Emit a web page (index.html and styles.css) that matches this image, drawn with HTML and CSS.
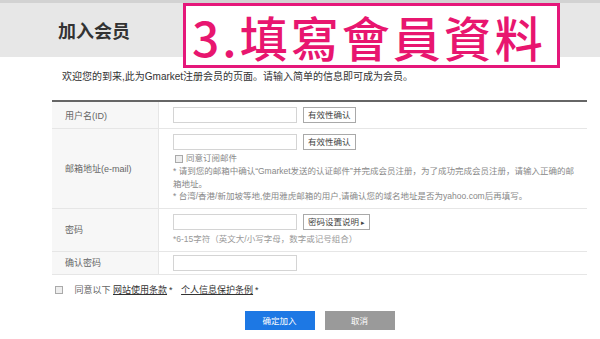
FILE: index.html
```html
<!DOCTYPE html>
<html lang="zh-CN">
<head>
  <meta charset="UTF-8">
  <meta name="viewport" content="width=device-width, initial-scale=1.0">
  <title>加入会员</title>
  <link rel="stylesheet" href="styles.css">
</head>
<body>
  <div class="top-bar">
    <h1>加入会员</h1>
  </div>

  <!-- 标注 -->
  <div class="stamp">3.填寫會員資料</div>

  <div class="content">
    <p class="intro">欢迎您的到来,此为Gmarket注册会员的页面。请输入简单的信息即可成为会员。</p>

    <table class="form-table">
      <tr class="row-id">
        <th>用户名(ID)</th>
        <td>
          <div class="field">
            <input type="text" class="text-input">
            <button class="check-btn">有效性确认</button>
          </div>
        </td>
      </tr>
      <tr class="row-mail">
        <th>邮箱地址(e-mail)</th>
        <td>
          <div class="field">
            <input type="text" class="text-input">
            <button class="check-btn">有效性确认</button>
          </div>
          <div class="subscribe"><span class="box"></span>同意订阅邮件</div>
          <p class="note">* 请到您的邮箱中确认“Gmarket发送的认证邮件”并完成会员注册，为了成功完成会员注册，请输入正确的邮箱地址。</p>
          <p class="note">* 台湾/香港/新加坡等地,使用雅虎邮箱的用户,请确认您的域名地址是否为yahoo.com后再填写。</p>
        </td>
      </tr>
      <tr class="row-pw">
        <th>密码</th>
        <td>
          <div class="field">
            <input type="password" class="text-input">
            <button class="check-btn">密码设置说明<span class="arrow">▸</span></button>
          </div>
          <p class="note pw-note">*6-15字符（英文大/小写字母，数字或记号组合）</p>
        </td>
      </tr>
      <tr class="row-confirm">
        <th>确认密码</th>
        <td>
          <input type="password" class="text-input">
        </td>
      </tr>
    </table>

    <div class="agree">
      <span class="box"></span>
      同意以下 <a href="#">网站使用条款</a><span class="star">*</span>
      <a href="#">个人信息保护条例</a><span class="star">*</span>
    </div>

    <div class="actions">
      <button class="btn btn-ok">确定加入</button>
      <button class="btn btn-cancel">取消</button>
    </div>
  </div>
</body>
</html>
```

FILE: styles.css
```css
body {
  margin: 0;
  font-family: "Liberation Sans", "Noto Sans CJK SC", sans-serif;
  color: #333;
  background: #fff;
}
.top-bar {
  height: 54px;
  border-top: 3px solid #d2d2d2;
  background: #e7e7e7;
  padding-left: 58px;
}
.top-bar h1 {
  margin: 0;
  font-size: 18px;
  line-height: 54px;
  font-weight: bold;
  color: #333;
  font-family: "Noto Sans CJK SC", sans-serif;
}
.stamp {
  position: absolute;
  left: 183px;
  top: 3px;
  width: 365px;
  height: 57px;
  padding: 2px 0 0 6px;
  border: 3px solid #e5177a;
  background: #fff;
  color: #e8166f;
  font-family: "Noto Sans CJK TC", sans-serif;
  font-weight: 500;
  font-size: 48px;
  line-height: 57px;
  letter-spacing: 3px;
  white-space: nowrap;
}
.content {
  width: 535px;
  margin-left: 52px;
}
.intro {
  margin: 13px 0 16px;
  padding-left: 10px;
  font-size: 10px;
  line-height: 14px;
  color: #333;
}
.form-table {
  width: 535px;
  border-collapse: collapse;
  border-top: 2px solid #666;
}
.form-table tr {
  border-bottom: 1px solid #e6e6e6;
}
.form-table th {
  width: 92px;
  padding-left: 13px;
  background: #f7f7f7;
  border-right: 1px solid #e6e6e6;
  text-align: left;
  font-weight: normal;
  font-size: 9px;
  color: #666;
}
.form-table td {
  padding: 5px 10px 5px 14px;
  vertical-align: top;
  font-size: 9px;
}
.form-table .row-confirm td {
  padding-top: 3px;
  padding-bottom: 3px;
}
.field {
  display: flex;
  align-items: center;
  gap: 6px;
}
.text-input {
  box-sizing: border-box;
  width: 124px;
  height: 16px;
  margin: 0;
  border: 1px solid #d4d4d4;
  background: #fff;
  display: block;
}
.check-btn {
  height: 16px;
  padding: 0 4px;
  border: 1px solid #a9a9a9;
  background: #fff;
  font-family: inherit;
  font-size: 8.5px;
  color: #444;
  line-height: 14px;
}
.arrow {
  font-size: 7px;
  margin-left: 2px;
}
.box {
  display: inline-block;
  width: 6px;
  height: 6px;
  border: 1px solid #aaa;
  background: #eee;
  vertical-align: middle;
  margin-right: 3px;
}
.subscribe {
  padding-left: 2px;
  margin-top: 1px;
  line-height: 14px;
  font-size: 8.5px;
  color: #888;
}
.note {
  margin: 0;
  font-size: 8.5px;
  line-height: 12.5px;
  color: #888;
}
.pw-note {
  margin-top: 3px;
  line-height: 13px;
  color: #999;
}
.agree {
  margin-top: 8px;
  padding-left: 3px;
  font-size: 9px;
  line-height: 14px;
  color: #666;
}
.agree .box {
  margin-right: 9px;
  width: 6px;
  height: 6px;
}
.agree a {
  color: #333;
  text-decoration: underline;
}
.star {
  margin: 0 6px 0 2px;
  color: #333;
}
.actions {
  margin-top: 14px;
  display: flex;
  justify-content: center;
  gap: 10px;
}
.btn {
  width: 70px;
  height: 19px;
  border: none;
  font-family: inherit;
  font-size: 8.5px;
  color: #fff;
}
.btn-ok {
  background: #1d78e4;
}
.btn-cancel {
  background: #9a9a9a;
}
```
